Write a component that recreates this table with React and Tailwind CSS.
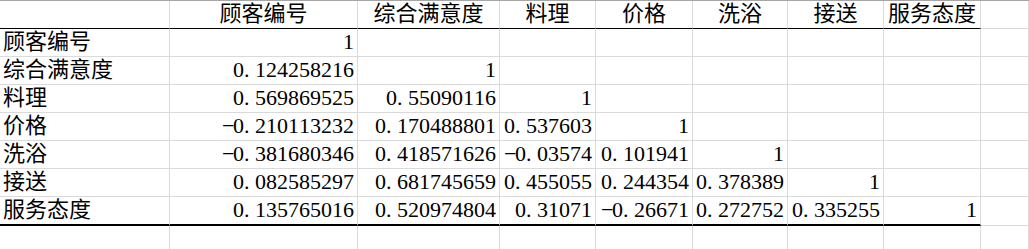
import React from 'react';

const cols = ['w-[170px]', 'w-[188px]', 'w-[142px]', 'w-[96px]', 'w-[97px]', 'w-[95px]', 'w-[96px]', 'w-[97px]'];

const names = ['顾客编号', '综合满意度', '料理', '价格', '洗浴', '接送', '服务态度'];

const matrix = [
	['1'],
	['0.124258216', '1'],
	['0.569869525', '0.55090116', '1'],
	['-0.210113232', '0.170488801', '0.537603', '1'],
	['-0.381680346', '0.418571626', '-0.03574', '0.101941', '1'],
	['0.082585297', '0.681745659', '0.455055', '0.244354', '0.378389', '1'],
	['0.135765016', '0.520974804', '0.31071', '-0.26671', '0.272752', '0.335255', '1'],
];

// SimSun style: every digit, dot and minus takes half an em
function Num({ value }) {
	return (
		<span className="whitespace-nowrap">
			{value.split('').map((ch, i) => (
				<span
					key={i}
					className={`inline-block w-[0.5em] ${ch === '.' ? 'text-left' : 'text-center'}`}
				>
					{ch === '-' ? '\u2212' : ch}
				</span>
			))}
		</span>
	);
}

function Row({ cells, last, header }) {
	const line = header
		? 'border-b border-b-black'
		: last
			? 'border-b-2 border-b-black'
			: 'border-b border-b-[#dadada]';
	return (
		<div className={`flex ${last ? 'h-[29px]' : 'h-[28px]'}`}>
			{cols.map((w, i) => (
				<div
					key={i}
					className={`${w} shrink-0 flex items-end pb-[3px] border-r border-r-[#dadada] ${line} ${
						header ? 'justify-center' : i === 0 ? 'justify-start pl-[3px]' : 'justify-end pr-[3px]'
					}`}
				>
					{cells[i] !== undefined && (i === 0 || header ? cells[i] : <Num value={cells[i]} />)}
				</div>
			))}
			<div className="flex-1 border-r border-r-[#dadada] border-b border-b-[#dadada]" />
		</div>
	);
}

function App() {
	return (
		<div
			className="w-[1029px] h-[249px] overflow-hidden bg-white text-black text-[22px] leading-none border-t border-t-[#a6a6a6]"
			style={{ fontFamily: '"Liberation Serif", "Noto Sans CJK SC", serif' }}
		>
			<Row header cells={['', ...names]} />
			{matrix.map((vals, r) => (
				<Row key={r} last={r === matrix.length - 1} cells={[names[r], ...vals]} />
			))}
			<div className="flex h-[30px]">
				{cols.map((w, i) => (
					<div key={i} className={`${w} shrink-0 border-r border-r-[#dadada]`} />
				))}
				<div className="flex-1 border-r border-r-[#dadada]" />
			</div>
		</div>
	);
}

export default App;
